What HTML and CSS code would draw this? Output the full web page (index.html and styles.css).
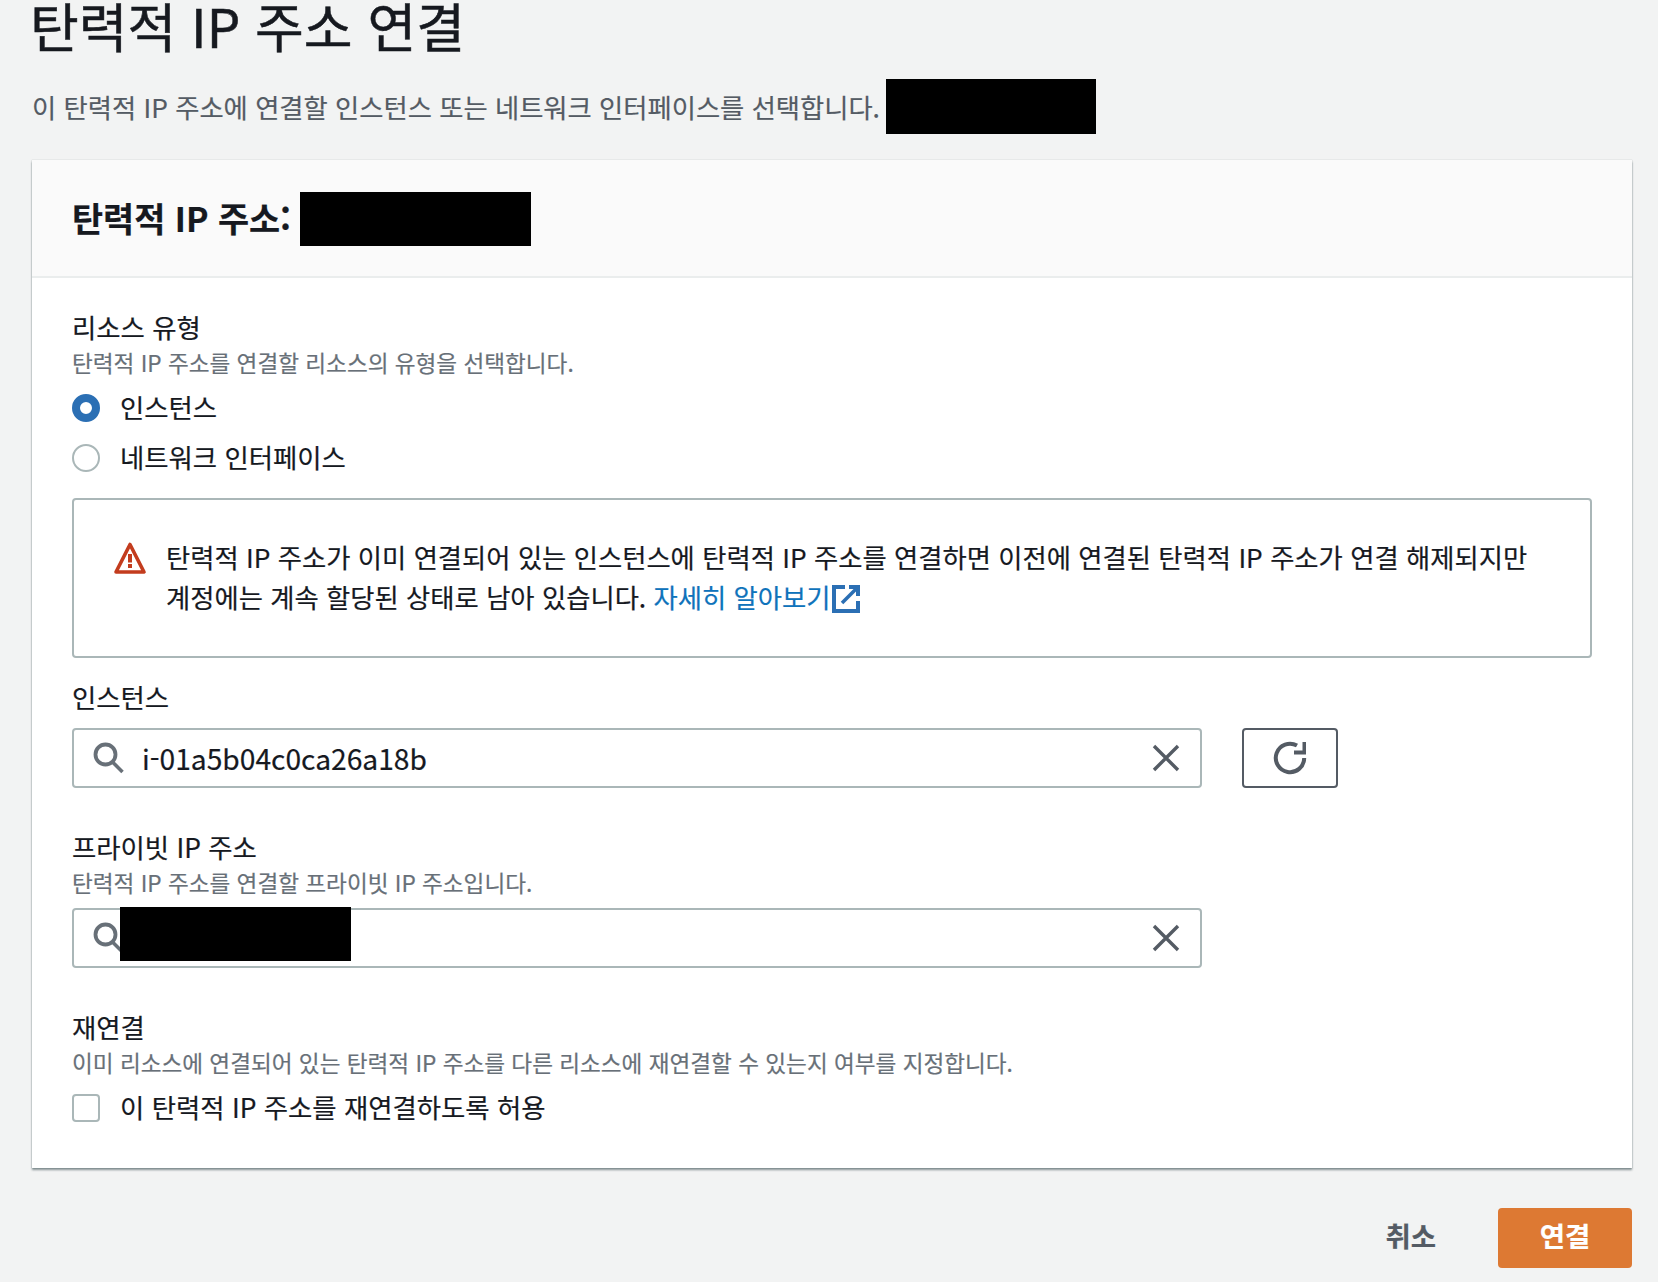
FILE: index.html
```html
<!DOCTYPE html>
<html lang="ko">
<head>
<meta charset="utf-8">
<title>탄력적 IP 주소 연결</title>
<link rel="stylesheet" href="styles.css">
</head>
<body>
<main class="page">
  <h1 class="title">탄력적 IP 주소 연결</h1>
  <div class="intro">
    <p class="intro-text">이 탄력적 IP 주소에 연결할 인스턴스 또는 네트워크 인터페이스를 선택합니다.</p>
    <span class="redact redact-intro"></span>
  </div>

  <section class="card">
    <header class="card-head">
      <h2 class="card-title">탄력적 IP 주소:</h2>
      <span class="redact redact-head"></span>
    </header>
    <div class="card-body">
      <div class="label">리소스 유형</div>
      <div class="hint">탄력적 IP 주소를 연결할 리소스의 유형을 선택합니다.</div>
      <div class="radios">
        <div class="option"><span class="radio radio-on"></span><span class="option-text">인스턴스</span></div>
        <div class="option"><span class="radio"></span><span class="option-text">네트워크 인터페이스</span></div>
      </div>

      <div class="alert">
        <svg class="alert-icon" viewBox="0 0 32 32" aria-hidden="true">
          <path d="M16 2.5 L30 30 H2 Z" fill="none" stroke="#c33c1e" stroke-width="3.6" stroke-linejoin="round"/>
          <rect x="14" y="12" width="4" height="8.5" fill="#c33c1e"/>
          <rect x="14" y="22" width="4" height="4" fill="#c33c1e"/>
        </svg>
        <p class="alert-text">탄력적 IP 주소가 이미 연결되어 있는 인스턴스에 탄력적 IP 주소를 연결하면 이전에 연결된 탄력적 IP 주소가 연결 해제되지만 계정에는 계속 할당된 상태로 남아 있습니다. <a class="link" href="#">자세히 알아보기<svg class="ext-icon" viewBox="0 0 28 28" aria-hidden="true"><path d="M13 2 H2 V26 H26 V16" fill="none" stroke="#2b6fb4" stroke-width="4"/><path d="M17 2 H26 V11" fill="none" stroke="#2b6fb4" stroke-width="4"/><path d="M25 3 L10 18" fill="none" stroke="#2b6fb4" stroke-width="3.6"/></svg></a></p>
      </div>

      <div class="label label-instance">인스턴스</div>
      <div class="input-row">
        <div class="input">
          <svg class="search" viewBox="0 0 32 32" aria-hidden="true"><circle cx="12.5" cy="12.5" r="10" fill="none" stroke="#687078" stroke-width="3.8"/><path d="M19.5 20 L29.5 30" fill="none" stroke="#687078" stroke-width="3.6"/></svg>
          <span class="input-value">i-01a5b04c0ca26a18b</span>
          <svg class="clear" viewBox="0 0 28 28" aria-hidden="true"><path d="M2 2 L26 26 M26 2 L2 26" fill="none" stroke="#545b64" stroke-width="3.4"/></svg>
        </div>
        <div class="refresh">
          <svg class="refresh-icon" viewBox="0 0 34 34" aria-hidden="true"><path d="M31.2 17 A14.2 14.2 0 1 1 24 4.6" fill="none" stroke="#545b64" stroke-width="4"/><path d="M21 13.5 H33 V1 H29.5 V9.5 H21 Z" fill="#545b64"/></svg>
        </div>
      </div>

      <div class="label label-private">프라이빗 IP 주소</div>
      <div class="hint">탄력적 IP 주소를 연결할 프라이빗 IP 주소입니다.</div>
      <div class="input-row input-row-private">
        <div class="input">
          <svg class="search" viewBox="0 0 32 32" aria-hidden="true"><circle cx="12.5" cy="12.5" r="10" fill="none" stroke="#687078" stroke-width="3.8"/><path d="M19.5 20 L29.5 30" fill="none" stroke="#687078" stroke-width="3.6"/></svg>
          <span class="input-value"></span>
          <svg class="clear" viewBox="0 0 28 28" aria-hidden="true"><path d="M2 2 L26 26 M26 2 L2 26" fill="none" stroke="#545b64" stroke-width="3.4"/></svg>
          <span class="redact redact-input"></span>
        </div>
      </div>

      <div class="label label-reconnect">재연결</div>
      <div class="hint">이미 리소스에 연결되어 있는 탄력적 IP 주소를 다른 리소스에 재연결할 수 있는지 여부를 지정합니다.</div>
      <div class="option option-check"><span class="checkbox"></span><span class="option-text">이 탄력적 IP 주소를 재연결하도록 허용</span></div>
    </div>
  </section>

  <footer class="actions">
    <span class="cancel">취소</span>
    <span class="submit"><span class="submit-text">연결</span></span>
  </footer>
</main>
</body>
</html>
```
FILE: styles.css
```css
* { box-sizing: border-box; }
html, body { margin: 0; padding: 0; }
body {
  height: 1282px;
  overflow: hidden;
  background: #f2f3f3;
  color: #16191f;
  font-family: "Noto Sans CJK KR", "Noto Sans", sans-serif;
  font-size: 26.4px;
  -webkit-text-stroke: .2px currentColor;
}
.page { width: 1658px; padding: 0 26px 0 32px; }
.title { margin: 0 0 0 -2px; height: 54px; font-size: 53px; line-height: 50px; font-weight: 400; -webkit-text-stroke: .5px currentColor; }
.intro { display: flex; align-items: center; margin-top: 25px; height: 55px; }
.intro-text { margin: 0; font-size: 26.3px; line-height: 40px; color: #545b64; }
.redact { display: block; background: #000; flex: none; }
.redact-intro { width: 210px; height: 55px; margin-left: 6px; }
.card {
  margin-top: 26px;
  height: 1008px;
  background: #fff;
  box-shadow: 0 2px 2px rgba(0, 28, 36, .45), 0 0 1px rgba(0, 28, 36, .25);
}
.card-head {
  display: flex;
  align-items: center;
  height: 118px;
  padding: 0 40px;
  background: #fafafa;
  border-bottom: 2px solid #eaeded;
}
.card-title { margin: 0; font-size: 33.8px; line-height: 44px; font-weight: 700; }
.redact-head { width: 231px; height: 54px; margin: 2px 0 0 9px; }
.card-body { padding: 30px 40px 35px; }
.label { height: 38px; line-height: 37px; font-size: 26.4px; }
.hint { height: 34px; line-height: 33px; font-size: 22.6px; color: #687078; }
.radios { margin-top: 3px; }
.option { display: flex; align-items: center; gap: 20px; height: 50px; line-height: 48px; font-size: 26.4px; }
.option-text { margin-top: -2px; }
.radio {
  flex: none;
  width: 28px;
  height: 28px;
  border-radius: 50%;
  border: 2px solid #aab7b8;
  background: #fff;
}
.radio-on { border: 8px solid #2b6fb4; }
.alert {
  display: flex;
  gap: 20px;
  margin-top: 15px;
  height: 160px;
  padding: 37px 40px 0;
  border: 2px solid #aab7b8;
  border-radius: 4px;
  word-break: keep-all;
}
.alert-icon { flex: none; width: 32px; height: 32px; margin-top: 5px; overflow: visible; }
.alert-text { margin: 0; font-size: 26.34px; line-height: 40px; }
.link { color: #0f73bb; text-decoration: none; }
.ext-icon { display: inline-block; width: 28px; height: 28px; margin-left: 1px; vertical-align: -5px; }
.label-instance { margin-top: 20px; }
.input-row { display: flex; gap: 40px; margin-top: 12px; }
.input-row-private { margin-top: 8px; }
.input {
  position: relative;
  display: flex;
  align-items: center;
  width: 1130px;
  height: 60px;
  padding: 0 20px 0 19px;
  background: #fff;
  border: 2px solid #aab7b8;
  border-radius: 4px;
}
.search { flex: none; width: 32px; height: 32px; }
.input-value { flex: 1; margin-left: 17px; font-size: 28.2px; line-height: 40px; }
.clear { flex: none; width: 28px; height: 28px; margin-right: 0; }
.redact-input { position: absolute; left: 46px; top: -3px; width: 231px; height: 54px; }
.refresh {
  display: flex;
  align-items: center;
  justify-content: center;
  width: 96px;
  height: 60px;
  border: 2px solid #545b64;
  border-radius: 4px;
}
.refresh-icon { width: 34px; height: 34px; }
.label-private { margin-top: 40px; }
.label-reconnect { margin-top: 40px; }
.option-check { margin-top: 3px; }
.checkbox {
  flex: none;
  width: 28px;
  height: 28px;
  background: #fff;
  border: 2px solid #aab7b8;
  border-radius: 4px;
}
.actions { display: flex; justify-content: flex-end; align-items: center; gap: 62px; margin-top: 40px; }
.cancel { font-size: 27.5px; line-height: 40px; margin-bottom: 6px; font-weight: 700; color: #545b64; }
.submit {
  display: flex;
  align-items: center;
  justify-content: center;
  width: 134px;
  height: 60px;
  border-radius: 4px;
  background: #dd7933;
  color: #fff;
  font-size: 27.5px;
  font-weight: 700;
}
.submit-text { line-height: 40px; margin-bottom: 6px; }
```
